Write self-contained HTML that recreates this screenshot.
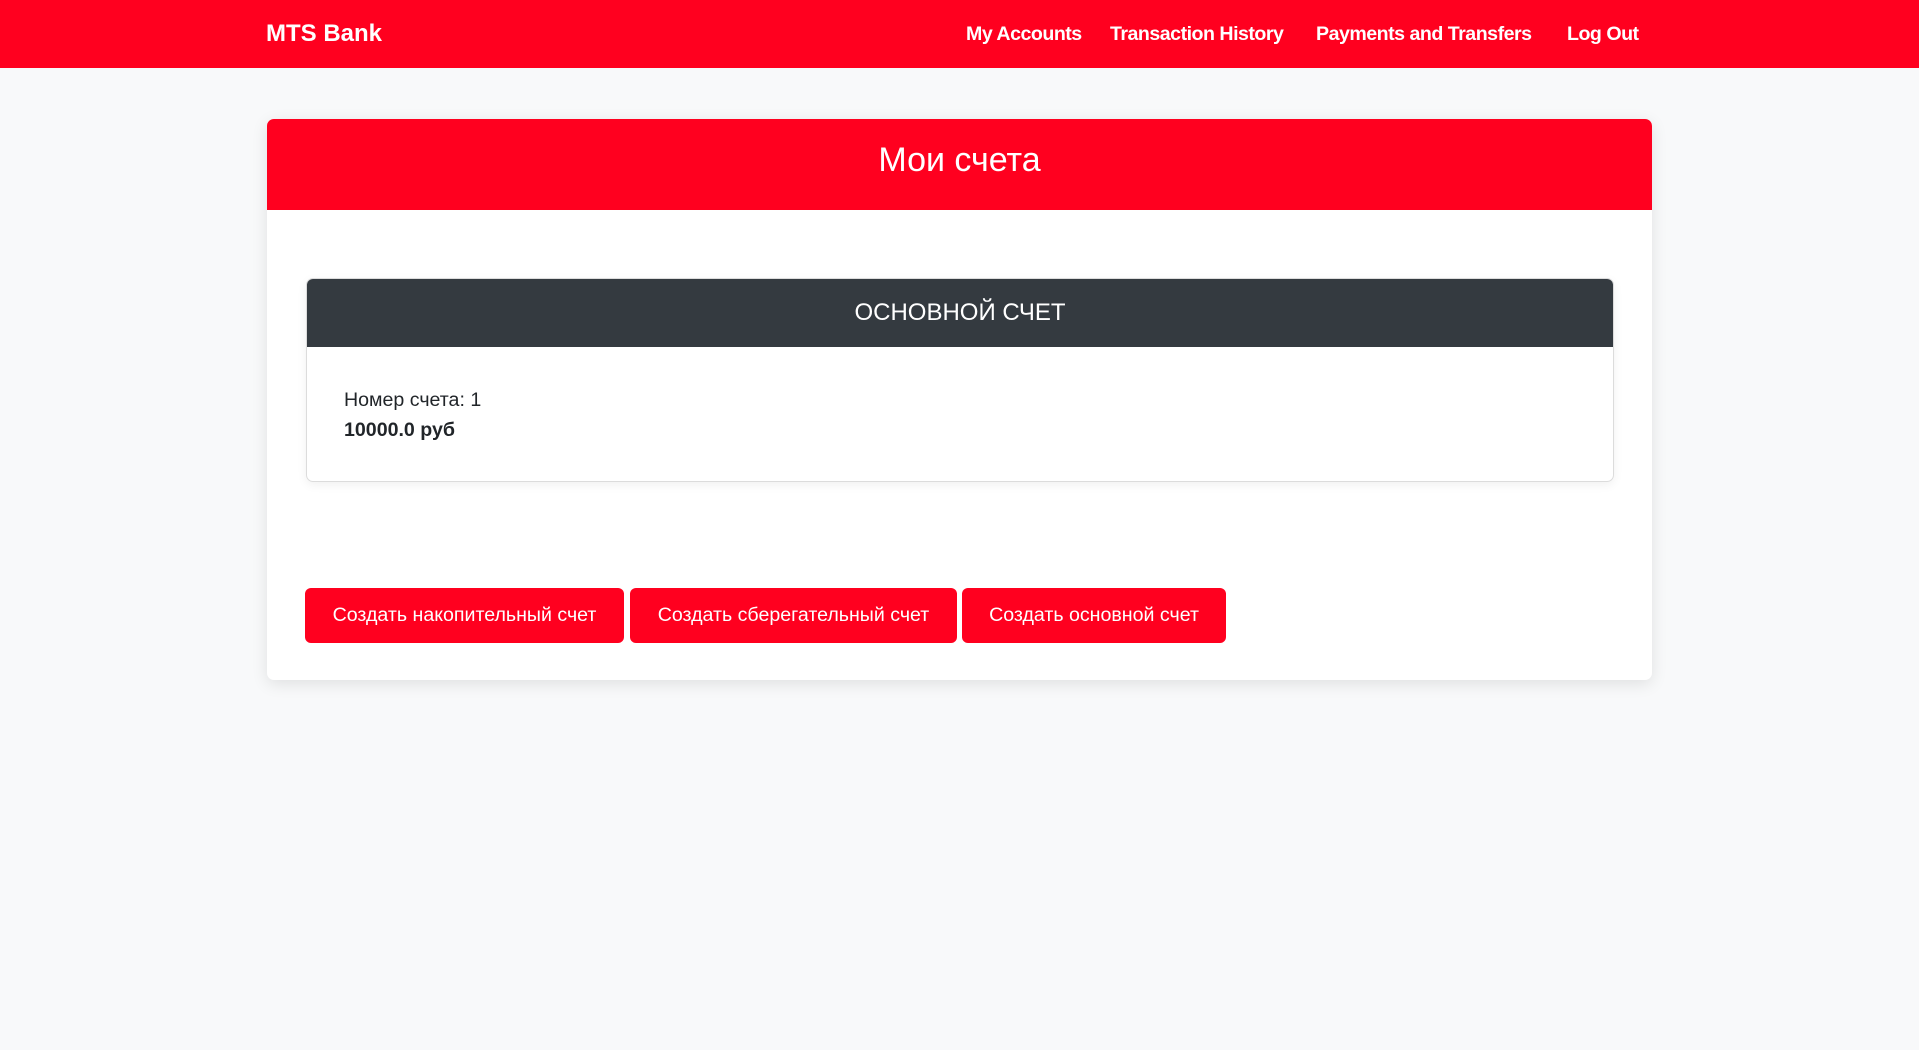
<!DOCTYPE html>
<html><head><meta charset="utf-8"><style>
*{box-sizing:border-box;margin:0;padding:0}
body{width:1919px;height:1050px;background:#f8f9fa;font-family:"Liberation Sans",Arial,sans-serif;color:#212529;position:relative;overflow:hidden}
.nav{position:absolute;left:0;top:0;width:1919px;height:68px;background:#ff001f}
.nav span{position:absolute;top:23px;color:#fff;font-weight:bold;font-size:19.6px;white-space:nowrap;letter-spacing:-0.5px}
.brand{left:266px;font-size:24px!important;top:20px!important;letter-spacing:0!important}
.card{position:absolute;left:267px;top:119px;width:1385px;height:561px;background:#fff;border-radius:7px;box-shadow:0 4px 16px rgba(0,0,0,.1);overflow:hidden}
.ch{height:91px;background:#ff001f;color:#fff;font-size:34px;text-align:center;line-height:82px}
.inner{position:absolute;left:39px;top:159px;width:1308px;height:204px;border:1px solid #dcdcdc;border-radius:7px;overflow:hidden;box-shadow:0 3px 10px rgba(0,0,0,.06)}
.ih{height:68px;background:#343a40;color:#fff;font-size:24px;text-align:center;line-height:68px}
.ib{padding:38px 37px;font-size:19.6px;line-height:30px}
.btn{position:absolute;top:469px;height:55px;background:#ff001f;color:#fff;font-size:19.6px;line-height:55px;text-align:center;border-radius:6px}
</style></head><body>
<div class="nav">
<span class="brand">MTS Bank</span>
<span style="left:966px">My Accounts</span>
<span style="left:1110px">Transaction History</span>
<span style="left:1316px">Payments and Transfers</span>
<span style="left:1567px">Log Out</span>
</div>
<div class="card">
<div class="ch">Мои счета</div>
<div class="inner"><div class="ih">ОСНОВНОЙ СЧЕТ</div>
<div class="ib">Номер счета: 1<br><b>10000.0 руб</b></div></div>
<div class="btn" style="left:38px;width:319px">Создать накопительный счет</div>
<div class="btn" style="left:363px;width:327px">Создать сберегательный счет</div>
<div class="btn" style="left:695px;width:264px">Создать основной счет</div>
</div>
</body></html>
